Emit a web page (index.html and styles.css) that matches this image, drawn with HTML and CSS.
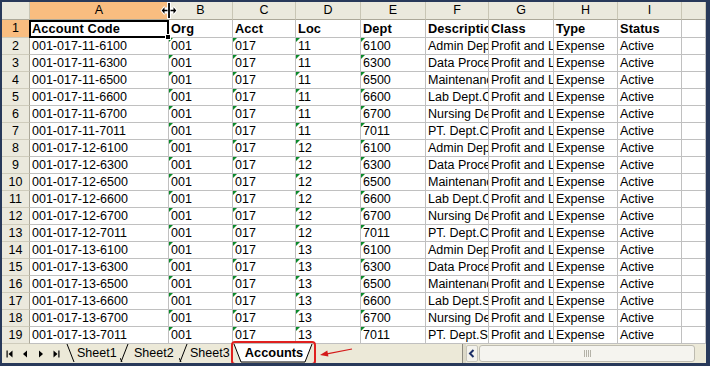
FILE: index.html
```html
<!DOCTYPE html>
<html lang="en">
<head>
  <meta charset="UTF-8">
  <title>Accounts - Excel</title>
  <link rel="stylesheet" href="styles.css">
</head>
<body>

  <div class="window">
    <!-- Worksheet grid -->
    <div class="sheet" id="sheet">
      <div class="row head">
        <div class="cell corner"></div>
        <div class="cell ch sel">A</div>
        <div class="cell ch">B</div>
        <div class="cell ch">C</div>
        <div class="cell ch">D</div>
        <div class="cell ch">E</div>
        <div class="cell ch">F</div>
        <div class="cell ch">G</div>
        <div class="cell ch">H</div>
        <div class="cell ch">I</div>
        <div class="cell ch"></div>
      </div>
      <div class="row first">
        <div class="cell rh sel">1</div>
        <div class="cell c b active">Account Code</div>
        <div class="cell c b">Org</div>
        <div class="cell c b">Acct</div>
        <div class="cell c b">Loc</div>
        <div class="cell c b">Dept</div>
        <div class="cell c b">Description</div>
        <div class="cell c b">Class</div>
        <div class="cell c b">Type</div>
        <div class="cell c b">Status</div>
        <div class="cell c"></div>
      </div>
    </div>

    <!-- Sheet tabs and scrollbar -->
    <div class="tabbar">
      <div class="nav">
        <span class="nav-btn"><svg width="8" height="8" viewBox="0 0 8 8"><rect x="0.5" y="0.5" width="1.2" height="7" fill="#000"/><polygon points="2.5,4 6.5,0.5 6.5,7.5" fill="#000"/></svg></span>
        <span class="nav-btn"><svg width="8" height="8" viewBox="0 0 8 8"><polygon points="2,4 6,0.5 6,7.5" fill="#000"/></svg></span>
        <span class="nav-btn"><svg width="8" height="8" viewBox="0 0 8 8"><polygon points="6,4 2,0.5 2,7.5" fill="#000"/></svg></span>
        <span class="nav-btn"><svg width="8" height="8" viewBox="0 0 8 8"><polygon points="5.5,4 1.5,0.5 1.5,7.5" fill="#000"/><rect x="6.3" y="0.5" width="1.2" height="7" fill="#000"/></svg></span>
      </div>
      <div class="tabs">
        <svg class="edge" width="12" height="19" viewBox="0 0 12 19"><line x1="3" y1="0" x2="10" y2="18" stroke="#000" stroke-width="1"/></svg>
        <span class="tab tab1">Sheet1</span>
        <svg class="edge" width="11" height="19" viewBox="0 0 11 19"><line x1="1" y1="18" x2="8" y2="0" stroke="#000" stroke-width="1"/><line x1="0" y1="14" x2="2" y2="18" stroke="#000" stroke-width="1"/></svg>
        <span class="tab tab2">Sheet2</span>
        <svg class="edge" width="11" height="19" viewBox="0 0 11 19"><line x1="1" y1="18" x2="8" y2="0" stroke="#000" stroke-width="1"/><line x1="0" y1="14" x2="2" y2="18" stroke="#000" stroke-width="1"/></svg>
        <span class="tab tab3">Sheet3</span>
        <div class="tab-active">
          <svg class="tab-shape" width="85" height="19" viewBox="0 0 85 19">
            <polygon points="3,0 81,0 74,18 10,18" fill="#fff"/>
            <line x1="3" y1="0" x2="10" y2="18" stroke="#000" stroke-width="1"/>
            <line x1="10" y1="18" x2="74" y2="18" stroke="#000" stroke-width="1"/>
            <line x1="74" y1="18" x2="81" y2="0" stroke="#000" stroke-width="1"/>
          </svg>
          <span class="tab-label">Accounts</span>
        </div>
      </div>
      <div class="split"></div>
      <div class="hscroll">
        <span class="sb-btn"><svg width="8" height="9" viewBox="0 0 8 9"><polyline points="5.5,1 2,4.5 5.5,8" fill="none" stroke="#1c2f66" stroke-width="2"/></svg></span>
        <span class="sb-thumb"><span class="grip"></span></span>
      </div>
    </div>

    <!-- Overlays: resize cursor and red annotation -->
    <svg class="cursor" width="18" height="17" viewBox="0 0 18 17">
      <path d="M7 0h4v5.5h2.5V3.5L17.5 8.5l-4 5v-2H11V17H7v-5.5H4.5v2l-4-5 4-5v2H7z" fill="#fff"/>
      <path d="M8 1h0.9v15H8zM9.1 1H10v15H9.1zM1.7 8.5L4.5 5.2v2.6h3v1.4h-3v2.6zM16.3 8.5L13.5 5.2v2.6h-3v1.4h3v2.6z" fill="#000"/>
    </svg>
    <div class="mark"></div>
    <svg class="arrow" width="40" height="16" viewBox="0 0 40 16">
      <line x1="34" y1="5" x2="9" y2="9.8" stroke="#d41a1a" stroke-width="1.2"/>
      <polygon points="2,11 9.3,6.6 10.4,12.6" fill="#d41a1a"/>
    </svg>
  </div>

  <script>
    const depts = ["6100", "6300", "6500", "6600", "6700", "7011"];
    const locs = ["11", "12", "13"];

    function describe(loc, dept) {
      const site = loc === "13" ? "S" : "C";
      if (dept === "6100") return "Admin Dept. Cost";
      if (dept === "6300") return "Data Processing";
      if (dept === "6500") return "Maintenance";
      if (dept === "6600") return "Lab Dept." + site + "ost";
      if (dept === "6700") return "Nursing Dept.";
      return "PT. Dept." + site + "ost";
    }

    const sheet = document.getElementById("sheet");
    let n = 2;
    locs.forEach(loc => {
      depts.forEach(dept => {
        const row = document.createElement("div");
        row.className = "row";
        const cells = [
          ["rh", n],
          ["c", "001-017-" + loc + "-" + dept],
          ["c t", "001"],
          ["c t", "017"],
          ["c t", loc],
          ["c t", dept],
          ["c", describe(loc, dept)],
          ["c", "Profit and Loss"],
          ["c", "Expense"],
          ["c", "Active"],
          ["c", ""]
        ];
        cells.forEach(([cls, text]) => {
          const cell = document.createElement("div");
          cell.className = "cell " + cls;
          cell.textContent = text;
          row.appendChild(cell);
        });
        sheet.appendChild(row);
        n++;
      });
    });
  </script>
</body>
</html>
```

FILE: styles.css
```css
body {
  margin: 0;
  background: #263a58;
  font-family: "Liberation Sans", Arial, sans-serif;
  font-size: 12.5px;
  color: #000;
}

.window {
  position: relative;
  width: 710px;
  height: 366px;
  box-sizing: border-box;
  border-style: solid;
  border-color: #28395a;
  border-width: 2px 4px 3px 2px;
  background: #fff;
  overflow: hidden;
  display: flex;
  flex-direction: column;
}

/* grid */
.row {
  display: grid;
  grid-template-columns: 28px 139px 64px 63px 65px 65px 63px 65px 64px 64px 24px;
  height: 17px;
}

.row.head,
.row.first {
  height: 18px;
}

.cell {
  position: relative;
  border-right: 1px solid #c0c0c0;
  border-bottom: 1px solid #c0c0c0;
  white-space: nowrap;
  overflow: hidden;
  line-height: 16px;
}

.row.head .cell,
.row.first .cell {
  line-height: 17px;
}

.c {
  padding-left: 2px;
}

.b {
  font-weight: bold;
  font-size: 12.8px;
  letter-spacing: 0.1px;
}

.corner,
.ch,
.rh {
  background: #ebe9dd;
  text-align: center;
}

.corner,
.ch {
  border-right-color: #c9c6b5;
  border-bottom-color: #aca899;
}

.rh {
  border-right-color: #aca899;
  border-bottom-color: #cfccbc;
}

.ch.sel,
.rh.sel {
  background: #f9bd80;
}

/* text stored as number marker */
.t::before {
  content: "";
  position: absolute;
  left: 0;
  top: 0;
  border-top: 4px solid #0a8a2a;
  border-right: 4px solid transparent;
}

/* active cell */
.active {
  overflow: visible;
  z-index: 2;
}

.active::after {
  content: "";
  position: absolute;
  left: -1px;
  top: 0;
  right: -1px;
  bottom: -1px;
  border: 2px solid #000;
}

.active::before {
  content: "";
  position: absolute;
  right: -3px;
  bottom: -3px;
  width: 4px;
  height: 4px;
  background: #000;
  border: 1px solid #fff;
  z-index: 3;
}

/* tab bar */
.tabbar {
  flex: 1;
  display: flex;
  background: #ece9d8;
  font-size: 12.5px;
}

.nav {
  display: flex;
  width: 62px;
}

.nav-btn {
  width: 16px;
  display: flex;
  align-items: center;
  justify-content: center;
}

.tabs {
  display: flex;
  flex: 1;
}

.edge {
  display: block;
  flex: none;
}

.tab {
  line-height: 19px;
  white-space: nowrap;
}

.tab1 {
  width: 44px;
  padding-left: 1px;
  box-sizing: border-box;
}

.tab2 {
  width: 48px;
  padding-left: 3px;
  box-sizing: border-box;
}

.tab3 {
  width: 41px;
}

.tab-active {
  position: relative;
  width: 85px;
  height: 19px;
  margin-top: -1px;
}

.tab-shape {
  position: absolute;
  left: 0;
  top: 1px;
}

.tab-label {
  position: relative;
  display: block;
  text-align: center;
  font-weight: bold;
  font-size: 12.8px;
  line-height: 20px;
  padding-left: 1px;
}

.split {
  width: 4px;
  border-left: 1px solid #8c8a80;
  background: #dcd9c8;
  box-sizing: border-box;
}

.hscroll {
  display: flex;
  gap: 1px;
  width: 240px;
  padding: 1px 0;
  box-sizing: border-box;
}

.sb-btn {
  width: 12px;
  box-sizing: border-box;
  border: 1px solid #c8c6ba;
  border-radius: 2px;
  background: #f3f2ec;
  display: flex;
  align-items: center;
  justify-content: center;
}

.sb-thumb {
  width: 216px;
  box-sizing: border-box;
  border: 1px solid #bdbbb0;
  border-radius: 3px;
  background: #f5f4ef;
  display: flex;
  align-items: center;
  justify-content: center;
}

.grip {
  width: 7px;
  height: 7px;
  background: repeating-linear-gradient(90deg, #b4b2a8 0 1px, transparent 1px 2px);
}

/* overlays */
.cursor {
  position: absolute;
  left: 158px;
  top: 0;
  z-index: 5;
}

.mark {
  position: absolute;
  left: 229px;
  top: 339px;
  width: 85px;
  height: 24px;
  box-sizing: border-box;
  border: 2px solid #e0201f;
  border-radius: 4px;
}

.arrow {
  position: absolute;
  left: 316px;
  top: 342px;
}
```
